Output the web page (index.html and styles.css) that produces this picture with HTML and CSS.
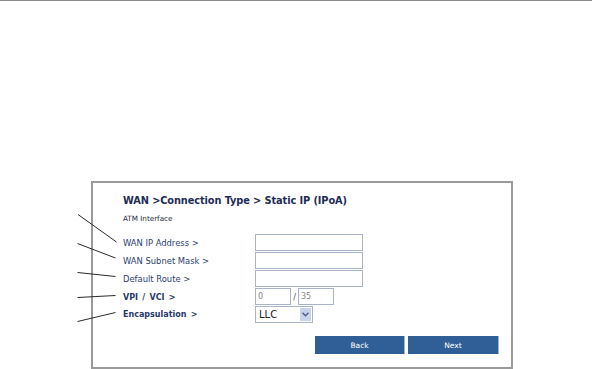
FILE: index.html
```html
<!DOCTYPE html>
<html>
<head>
<meta charset="utf-8">
<link rel="stylesheet" href="styles.css">
</head>
<body>
<div class="topline"></div>
<div class="stage">
  <div class="panel">
    <h1 class="title">WAN &gt;Connection Type &gt; Static IP (IPoA)</h1>
    <div class="section">ATM Interface</div>
    <div class="form">
      <label class="lbl">WAN IP Address &gt;</label>
      <div class="field"><span class="input wide"></span></div>
      <label class="lbl">WAN Subnet Mask &gt;</label>
      <div class="field"><span class="input wide"></span></div>
      <label class="lbl">Default Route &gt;</label>
      <div class="field"><span class="input wide"></span></div>
      <label class="lbl bold">VPI / VCI &gt;</label>
      <div class="field"><span class="input short">0</span><span class="slash">/</span><span class="input short">35</span></div>
      <label class="lbl bold">Encapsulation &gt;</label>
      <div class="field"><span class="select"><span class="sel-text">LLC</span><span class="sel-btn"><svg width="7" height="5" viewBox="0 0 7 5"><path d="M0.5 0.8 L3.5 3.8 L6.5 0.8" fill="none" stroke="#4a5f86" stroke-width="1.4"/></svg></span></span></div>
    </div>
    <div class="buttons">
      <span class="btn back">Back</span>
      <span class="btn next">Next</span>
    </div>
  </div>
  <svg class="leaders" width="592" height="369" viewBox="0 0 592 369">
    <g stroke="#2a2a2a" stroke-width="1" fill="none">
      <line x1="78" y1="214.5" x2="116.5" y2="242"/>
      <line x1="77.5" y1="243.5" x2="115.5" y2="258"/>
      <line x1="77.5" y1="272.5" x2="115.5" y2="276.5"/>
      <line x1="77.5" y1="297.5" x2="115.5" y2="295.5"/>
      <line x1="77.5" y1="321.5" x2="115.5" y2="312.5"/>
    </g>
  </svg>
</div>
</body>
</html>
```
FILE: styles.css
```css
html, body {
  margin: 0;
  padding: 0;
  background: #ffffff;
}
body {
  width: 592px;
  height: 369px;
  overflow: hidden;
  font-family: "DejaVu Sans", Verdana, sans-serif;
}
.topline {
  height: 1px;
  background: #8a8a8a;
}
.stage {
  position: relative;
  display: flow-root;
  padding-top: 180px;
  height: 188px;
}
.panel {
  box-sizing: border-box;
  margin-left: 91px;
  width: 422px;
  height: 188px;
  border: 2px solid #9a9a9a;
  padding: 11px 12px 0 30px;
}
.title {
  margin: 0;
  font-size: 9.8px;
  line-height: 14px;
  font-weight: bold;
  color: #1e2c55;
  white-space: nowrap;
  letter-spacing: -0.1px;
}
.section {
  margin-top: 5px;
  font-size: 7.2px;
  line-height: 12px;
  color: #222a3a;
}
.form {
  margin-top: 9px;
  display: grid;
  grid-template-columns: 132px 1fr;
  grid-template-rows: 18px 18px 18px 18px 17px;
}
.lbl {
  display: flex;
  align-items: center;
  font-size: 8.4px;
  color: #2c3e6e;
  white-space: nowrap;
}
.lbl.bold {
  font-weight: bold;
  font-size: 8px;
  color: #27386a;
  word-spacing: 1.5px;
}
.field {
  display: flex;
  align-items: flex-start;
}
.input {
  box-sizing: border-box;
  display: flex;
  align-items: center;
  height: 17px;
  border: 1px solid #a9b4c6;
  background: #fff;
  font-size: 8px;
  color: #8a8a8a;
  padding-left: 2px;
}
.input.wide { width: 108px; }
.input.short { width: 36px; }
.slash {
  width: 7px;
  font-size: 8px;
  line-height: 19px;
  color: #555;
  text-align: center;
}
.select {
  box-sizing: border-box;
  display: flex;
  width: 58px;
  height: 17px;
  border: 1px solid #a9b4c6;
  background: #fff;
}
.sel-text {
  flex: 1;
  font-size: 10px;
  line-height: 15px;
  padding-left: 3px;
  color: #222;
}
.sel-btn {
  width: 11px;
  margin: 1px 1px 1px 0;
  background: #c8d4ea;
  display: flex;
  align-items: center;
  justify-content: center;
}
.buttons {
  margin-top: 13px;
  display: flex;
  justify-content: flex-end;
  gap: 3px;
}
.btn {
  box-sizing: border-box;
  height: 18px;
  display: flex;
  align-items: center;
  justify-content: center;
  background: #2f5f96;
  border-right: 1px solid #9fb7d6;
  color: #ffffff;
  font-size: 7.5px;
}
.btn.back { width: 90px; }
.btn.next { width: 91px; }
.leaders {
  position: absolute;
  left: 0;
  top: -1px;
  pointer-events: none;
}
```
